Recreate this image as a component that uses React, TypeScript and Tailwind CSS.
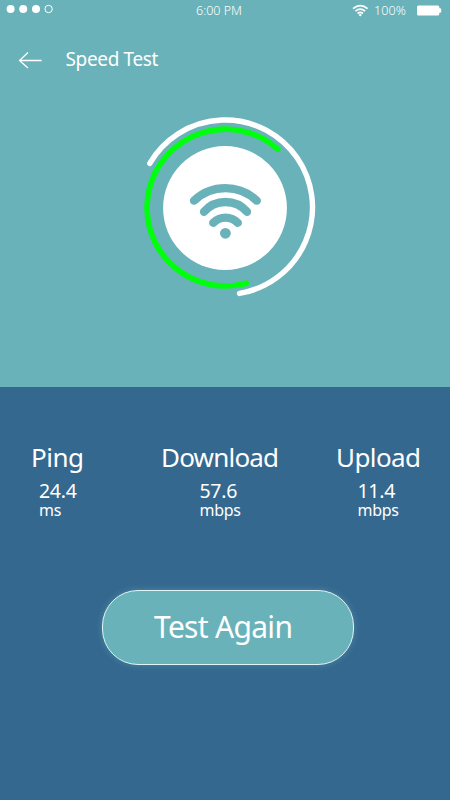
import React from "react";

const stats = [
  { label: "Ping", value: "24.4", unit: "ms", box: "w-[52px] ml-[31px]", inner: "ml-[8px]", track: "tracking-[-0.5px]" },
  { label: "Download", value: "57.6", unit: "mbps", box: "w-[118px] ml-[78px]", inner: "ml-[38.5px]", track: "tracking-[-0.8px]" },
  { label: "Upload", value: "11.4", unit: "mbps", box: "w-[86px] ml-[57px]", inner: "ml-[21.5px]", track: "tracking-[-0.6px]" },
];

function StatusBar() {
  return (
    <div className="flex h-[20px] items-center pl-[6px] pr-[8px] text-[12.5px] font-light leading-[20px]">
      <svg className="-mt-[2px] block" width="48" height="10" fill="#fff">
        <circle cx="4.6" cy="5" r="4" />
        <circle cx="17.2" cy="5" r="4" />
        <circle cx="30" cy="5" r="4" />
        <circle cx="42.6" cy="5" r="3.7" fill="none" stroke="#fff" strokeWidth="1" />
      </svg>
      <span className="ml-[142px] mt-[1px] w-[50px] whitespace-nowrap tracking-[0px]">6:00 PM</span>
      <svg className="ml-[106px] block" width="17" height="13" fill="none" stroke="#fff" strokeWidth="1.7">
        <path d="M1 4.7Q8.2 -1.3 15.6 4.7M3.4 7.2Q8.2 3 13.2 7.2M5.6 9.5Q8.2 7.2 11 9.5" />
        <circle cx="8.3" cy="11" r="1.2" fill="#fff" stroke="none" />
      </svg>
      <span className="ml-[5px] mt-[1px] w-[37px] whitespace-nowrap tracking-[0.1px]">100%</span>
      <svg className="ml-[6px] block" width="25" height="11" fill="#fff">
        <rect x="0" y="0.5" width="22.3" height="10" rx="1.6" />
        <rect x="21" y="3.3" width="3.2" height="4.4" rx="1.2" />
      </svg>
    </div>
  );
}

function Gauge() {
  return (
    <svg className="mx-auto block" width="190" height="190" viewBox="130 113 190 190" fill="none" strokeLinecap="round">
      <path d="M149.8 163.3A87.3 87.3 0 1 1 239.5 293.4" stroke="#fff" strokeWidth="5.4" />
      <path d="M277.8 149.3A78.4 78.4 0 1 0 246.3 283.2" stroke="#00ff0c" strokeWidth="5.6" />
      <circle cx="225" cy="208" r="61.9" fill="#fff" />
      <g stroke="#6ab2b9" strokeWidth="8.3">
        <path d="M194 200.7A45.5 45.5 0 0 1 256.8 200.7" />
        <path d="M204 211.8A28.5 28.5 0 0 1 247 211.8" />
        <path d="M213.2 222.8A17 17 0 0 1 237.8 222.8" />
      </g>
      <circle cx="225.4" cy="233.3" r="5.4" fill="#6ab2b9" />
    </svg>
  );
}

export default function App() {
  return (
    <div className="flex h-[800px] w-[450px] flex-col overflow-hidden bg-[#35688f] font-['Noto_Sans',sans-serif] text-white">
      <section className="h-[387px] shrink-0 bg-[#6ab2b9]">
        <StatusBar />
        <header className="flex h-[80px] items-center pl-[18px]">
          <svg className="block" width="26" height="20" fill="none" stroke="#fff" strokeWidth="1.3">
            <path d="M10 2.5L1.5 10.5L10 18M1.5 10.5H23.7" />
          </svg>
          <h1 className="ml-[21.5px] -mt-[2px] whitespace-nowrap text-[19px] leading-[24px] tracking-[-0.35px]">Speed Test</h1>
        </header>
        <div className="pt-[13px]">
          <Gauge />
        </div>
      </section>
      <section className="flex flex-1 flex-col">
        <div className="flex pt-[52px]">
          {stats.map((s) => (
            <div key={s.label} className={s.box}>
              <div className={`whitespace-nowrap text-[26px] leading-[36px] ${s.track}`}>{s.label}</div>
              <div className={s.inner}>
                <div className="mt-[5px] text-[19.5px] leading-[22px] tracking-[-0.3px]">{s.value}</div>
                <div className="text-[16px] leading-[17px] tracking-[-0.3px]">{s.unit}</div>
              </div>
            </div>
          ))}
        </div>
        <button className="ml-[102px] mt-[71px] flex h-[75px] w-[252px] items-center rounded-[36px] border border-[#dff5f7] bg-[#6ab2b9] pl-[51px] text-[30px] leading-[40px] shadow-[0_0_6px_rgba(106,178,185,0.45)]">
          <span className="-mt-[1px] whitespace-nowrap tracking-[-0.7px]">Test Again</span>
        </button>
      </section>
    </div>
  );
}
